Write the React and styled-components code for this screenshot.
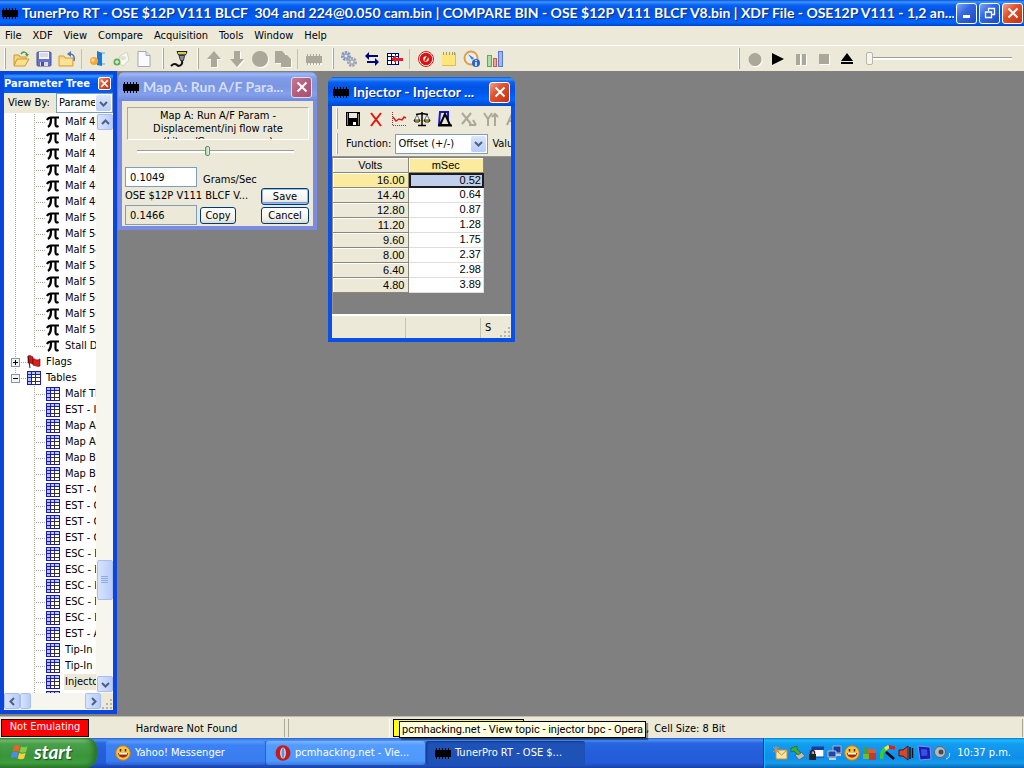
import React from "react";
import styled, { createGlobalStyle, css } from "styled-components";

const ui = '"DejaVu Sans Condensed", "DejaVu Sans", "Noto Sans", sans-serif';
const caption = 'Lato, "Open Sans", sans-serif';
const face = "#ece9d8";

const Global = createGlobalStyle`
  * { box-sizing: border-box; }
  body { margin: 0; background: #808080; font: 11px/14px ${ui}; color: #000; }
  button, input, select { font: inherit; color: inherit; margin: 0; padding: 0; }
  button { border: 0; background: none; white-space: nowrap; }
`;

/* ---------- shared ---------- */

const blueBar = "linear-gradient(#0a55dd 0, #3d95ff 2px, #0a62f2 5px, #0054e3 10px, #0058ee 16px, #0066ff 22px, #0046cc 100%)";
const paleBar = "linear-gradient(#7a96df 0, #a0b8f4 2px, #809cea 6px, #7a96e0 14px, #83a0ec 22px, #7088dc 100%)";

const Svg = styled.svg`
  display: block;
  flex: none;
`;

const Caption = styled.span`
  flex: 1;
  min-width: 0;
  overflow: hidden;
  white-space: nowrap;
  font: bold 14px/20px ${caption};
  color: ${(p) => (p.$inactive ? "#d4def8" : "#fff")};
  text-shadow: ${(p) => (p.$inactive ? "none" : "1px 1px 0 #0a2a80")};
`;

const CaptionButton = styled.button`
  flex: none;
  width: 21px;
  height: 21px;
  display: flex;
  align-items: center;
  justify-content: center;
  border: 1px solid #fff;
  border-radius: 3px;
  background: linear-gradient(135deg, #7fa5f5, #3468e0 40%, #1c48c4);
  ${(p) => p.$kind === "close" && css`background: linear-gradient(135deg, #f0a088, #e2522c 40%, #c23410);`}
  ${(p) => p.$kind === "faded" && css`background: linear-gradient(135deg, #c87890, #b45c7c 50%, #a85070); border-color: #d8e0f8;`}
`;

const Chip = ({ fill = "#000", light }) => (
  <Svg width="16" height="16" viewBox="0 0 16 16" shapeRendering="crispEdges">
    {light && <path d="M1 13h16v1H1zM15 5h2v8h-2z" fill="#fff" />}
    <path d="M0 5h16v7H0z" fill={fill} />
    <path d="M1 3h1v2H1zM4 3h1v2H4zM7 3h1v2H7zM10 3h1v2h-1zM13 3h1v2h-1zM1 12h1v2H1zM4 12h1v2H4zM7 12h1v2H7zM10 12h1v2h-1zM13 12h1v2h-1z" fill={fill} />
  </Svg>
);

const Cross = ({ size = 12, width = 2 }) => (
  <Svg width={size} height={size} viewBox="0 0 12 12">
    <path d="M1.5 1.5l9 9M10.5 1.5l-9 9" stroke="#fff" strokeWidth={width} fill="none" />
  </Svg>
);

const Chevron = ({ turn = 0 }) => (
  <Svg width="9" height="9" viewBox="0 0 9 9">
    <path d="M1 3l3.500 3.500L8 3" stroke="#4d6185" strokeWidth="2" fill="none" transform={`rotate(${turn} 4.500 4.500)`} />
  </Svg>
);

/* ---------- frame ---------- */

const App_ = styled.div`
  display: flex;
  flex-direction: column;
  height: 100vh;
  min-height: 480px;
  overflow: hidden;
`;

const TitleBar = styled.header`
  flex: none;
  height: 26px;
  display: flex;
  align-items: center;
  gap: 2px;
  padding: 0 1px 0 2px;
  background: ${blueBar};
  ${Caption} { padding-left: 2px; }
`;

const MenuBar = styled.nav`
  flex: none;
  display: flex;
  height: 20px;
  background: ${face};
  border-bottom: 1px solid #fff;
`;

const MenuItem = styled.button`
  padding: 0 6px 0 5px;
`;

const ToolbarRow = styled.div`
  flex: none;
  display: flex;
  gap: 3px;
  height: 25px;
  padding-right: 12px;
  background: ${face};
`;

const Band = styled.div`
  display: flex;
  align-items: center;
  min-width: 0;
  &::before {
    content: "";
    box-sizing: border-box;
    flex: none;
    width: 2px;
    height: 21px;
    margin: 0 3px 0 4px;
    border-left: 1px solid #fff;
    border-right: 1px solid #aca899;
  }
  ${(p) => p.$right && css`margin-left: auto;`}
`;

const ToolButton = styled.button`
  flex: none;
  width: 23px;
  height: 22px;
  display: flex;
  align-items: center;
  justify-content: center;
`;

const Divider = styled.span`
  flex: none;
  width: 8px;
  height: 20px;
  background: linear-gradient(#c5c2b0, #c5c2b0) 3px 0 / 1px 100% no-repeat;
`;

const Spacer = styled.span`
  flex: none;
  width: 8px;
`;

const Range = styled.input`
  appearance: none;
  display: block;
  height: ${(p) => (p.$small ? 12 : 14)}px;
  width: ${(p) => (p.$small ? "100%" : "146px")};
  background: linear-gradient(#9d9c99 0 1px, #fff 1px 3px) 0 center / 100% 3px no-repeat;
  &::-webkit-slider-thumb {
    appearance: none;
    width: ${(p) => (p.$small ? 5 : 7)}px;
    height: ${(p) => (p.$small ? 10 : 13)}px;
    border: 1px solid ${(p) => (p.$small ? "#5e8f6c" : "#b8b6a8")};
    border-radius: 2px;
    background: ${(p) => (p.$small ? "linear-gradient(90deg, #9ad8a4, #f4f4ee)" : "#f6f5ee")};
  }
`;

/* ---------- toolbar drawings ---------- */

const gray = "#aca899";
const Icon = ({ children, crisp, size = 18 }) => (
  <Svg width={size} height={size} viewBox="0 0 18 18" shapeRendering={crisp ? "crispEdges" : "auto"}>{children}</Svg>
);

const OpenFolder = () => (
  <Icon>
    <path d="M2 15V5h5l1 2h6v3" fill="#f6d77a" stroke="#c89a3c" />
    <path d="M2 16l3-7h12l-4 7z" fill="#fbe08a" stroke="#c89a3c" />
    <path d="M9 4c2-3 5-2 6 0" fill="none" stroke="#4d9a4a" strokeWidth="1.500" /><path d="M13 4h4l-2 3z" fill="#4d9a4a" />
  </Icon>
);
const Floppy = () => (
  <Icon>
    <rect x="2" y="2" width="14" height="14" rx="1" fill="#6a72c8" stroke="#4b4f9e" />
    <path d="M4 2h10v7H4z" fill="#f4f5fb" /><path d="M5 4h8M5 6h8" stroke="#b9bdd8" />
    <path d="M5 12h8v4H5z" fill="#d9dbe8" /><path d="M6 12h3v4H6z" fill="#4b4f9e" />
  </Icon>
);
const BackFolder = () => (
  <Icon>
    <path d="M1 16V6h5l1 2h8v8z" fill="#f8d873" stroke="#cf9f3e" /><path d="M2 9h12v6H2z" fill="#fbe294" />
    <path d="M16 11c1-5-1-7-4-7" fill="none" stroke="#5673b5" strokeWidth="1.500" /><path d="M9 4l4-3v6z" fill="#5673b5" />
  </Icon>
);
const OpenDoor = () => (
  <Icon>
    <path d="M8 2h8v13H8z" fill="#9cc7ee" /><path d="M8 1l5 2v13l-5-1z" fill="#1e7ad0" /><path d="M13 4h3v9h-3z" fill="#d8ecfb" />
    <circle cx="5" cy="11" r="4" fill="#f6a83a" /><circle cx="4" cy="10" r="1.800" fill="#ffd98c" />
  </Icon>
);
const GreenDisk = () => (
  <Icon>
    <path d="M8 6l7-4 2 8-6 6-5-4z" fill="#f8f8f2" stroke="#d4d2c4" /><ellipse cx="11" cy="8" rx="3" ry="2" fill="#e2e0d2" />
    <circle cx="5" cy="12" r="3.500" fill="#5fae55" /><path d="M3 12h4M5 10v4" stroke="#fff" />
  </Icon>
);
const Page = () => (
  <Icon><path d="M3 1.500h8l4 4v11H3z" fill="#fbfbff" stroke="#a2a6b8" /><path d="M11 1.500v4h4" fill="#dfe1ee" stroke="#a2a6b8" /></Icon>
);
const Plug = () => (
  <Icon>
    <path d="M7 1.500h10l-1.500 3.500h-7z" fill="#8a8a8a" stroke="#222" /><path d="M8 3h8" stroke="#e9dd3c" strokeWidth="1.500" />
    <path d="M9 5.500h5.500l-1 5h-3z" fill="#8c8c94" stroke="#333" /><path d="M12 11c1 4-3 6-5 4s-4-1-6 1" fill="none" stroke="#111" strokeWidth="2" />
  </Icon>
);
const Shade = ({ d }) => (
  <Icon><path d={d} fill="#fff" transform="translate(1 1)" /><path d={d} fill={gray} /></Icon>
);
const upArrow = "M9 1l7 8h-4v8H6V9H2z";
const downArrow = "M9 17l7-8h-4V1H6v8H2z";
const disc = "M9 1a8 8 0 1 0 .1 0z";
const copies = "M1 1h7l3 3v1h2l4 4v8H7v-4H1z";
const record = "M9 3a6.500 6.500 0 1 0 .1 0z";

const Gears = () => (
  <Icon>
    <circle cx="6" cy="6" r="3.500" fill="#c8d4ec" stroke="#8396bd" strokeWidth="3" strokeDasharray="2 1" />
    <circle cx="6" cy="6" r="2" fill={face} stroke="#8396bd" />
    <circle cx="12" cy="12" r="3.500" fill="#d5d9e2" stroke="#9aa2b4" strokeWidth="3" strokeDasharray="2 1" />
    <circle cx="12" cy="12" r="2" fill={face} stroke="#9aa2b4" />
  </Icon>
);
const Swap = () => (
  <Icon>
    <path d="M2 6l4-4v3h9v2H6v3z" fill="#000080" /><path d="M16 12l-4-4v3H4v2h8v3z" fill="#000080" />
  </Icon>
);
const ImportTable = () => (
  <Icon crisp>
    <path d="M1 3h12v12H1z" fill="#fff" /><path d="M1 3h12v1H1zM1 6h12v1H1zM1 10h12v1H1zM1 14h12v1H1zM1 3h1v12H1zM5 3h1v12H5zM9 3h1v12H9zM12 3h1v12h-1z" fill="#000080" />
    <path d="M5 9l5-4v3h7v3h-7v3z" fill="#ee1c1c" />
  </Icon>
);
const Target = () => (
  <Icon>
    <circle cx="9" cy="9" r="7.500" fill="#fff" stroke="#d01c1c" /><circle cx="9" cy="9" r="4.500" fill="none" stroke="#d81414" strokeWidth="3.500" />
    <path d="M8 11l3-5" stroke="#d81414" strokeWidth="2" />
  </Icon>
);
const Notepad = () => (
  <Icon crisp>
    <path d="M2 3h14v13H2z" fill="#fbe67c" /><path d="M15 3h1v13h-1zM2 15h14v1H2z" fill="#e0bd4c" />
    <path d="M3 2h1v3H3zM6 2h1v3H6zM9 2h1v3H9zM12 2h1v3h-1zM14 2h1v3h-1z" fill="#a09a78" />
  </Icon>
);
const Compass = () => (
  <Icon>
    <circle cx="8" cy="8" r="6.500" fill="#e6eefa" stroke="#e0a040" strokeWidth="2" /><path d="M5 4l6 4-2 2z" fill="#5a7ac0" />
    <circle cx="13" cy="13" r="4" fill="#2a66c8" /><path d="M13 12v4M13 10v1" stroke="#fff" strokeWidth="1.500" />
  </Icon>
);
const Chart = () => (
  <Icon crisp>
    <path d="M1 5h5v12H1z" fill="#5cab58" /><path d="M2 6h3v10H2z" fill="#a9dfa0" />
    <path d="M7 8h4v9H7z" fill="#cc5a50" /><path d="M8 9h2v7H8z" fill="#f0a49c" />
    <path d="M12 1h5v16h-5z" fill="#5a78c8" /><path d="M13 2h3v14h-3z" fill="#a0b8f0" />
  </Icon>
);

/* ---------- parameter tree ---------- */

const Workspace = styled.main`
  flex: 1;
  min-height: 0;
  display: flex;
  background: #808080;
`;

const Dock = styled.aside`
  flex: none;
  width: 117px;
  margin-bottom: 2px;
  display: flex;
  flex-direction: column;
  border: 4px solid #0a45dc;
  border-top-width: 3px;
`;

const DockTitle = styled.div`
  flex: none;
  height: 19px;
  display: flex;
  align-items: center;
  justify-content: space-between;
  padding-right: 2px;
  background: ${blueBar};
  color: #fff;
  font-weight: bold;
  white-space: nowrap;
  ${CaptionButton} { width: 13px; height: 13px; border-radius: 2px; }
`;

const ViewBy = styled.div`
  flex: none;
  display: flex;
  align-items: center;
  justify-content: space-between;
  height: 20px;
  padding-left: 4px;
  background: ${face};
  white-space: nowrap;
`;

const SelectBox = styled.span`
  position: relative;
  flex: none;
  display: block;
  width: ${(p) => p.$w}px;
  height: 20px;
  border: 1px solid #7f9db9;
  background: #fff;
  select {
    appearance: none;
    display: block;
    width: 100%;
    height: 100%;
    border: 0;
    padding: 0 17px 0 2px;
    background: transparent;
    text-overflow: clip;
  }
  i {
    position: absolute;
    top: 1px;
    right: 1px;
    bottom: 1px;
    width: 15px;
    display: flex;
    align-items: center;
    justify-content: center;
    border-radius: 2px;
    background: linear-gradient(#dbe6fe, #b9cdf8);
    pointer-events: none;
  }
`;

const TreeArea = styled.div`
  flex: 1;
  min-height: 0;
  display: flex;
  background: #fff;
`;

const List = styled.ul`
  flex: 1;
  min-width: 0;
  margin: 0;
  padding: 1px 0 0;
  list-style: none;
  overflow: hidden;
`;

const dots = (angle) => `repeating-linear-gradient(${angle}deg, #a8a890 0 1px, transparent 1px 2px)`;

const Node = styled.li`
  display: flex;
  align-items: center;
  height: 16px;
  white-space: nowrap;
`;

const Root = styled.span`
  flex: none;
  width: 23px;
  height: 16px;
  display: flex;
  align-items: center;
  padding-left: 7px;
  background:
    ${(p) => (p.$line === "none" ? "none" : `${dots(180)} 11px 0 / 1px ${p.$line === "end" ? 8 : 16}px no-repeat`)}
    ${(p) => (p.$elbow ? `, ${dots(90)} 11px 8px / 12px 1px no-repeat` : "")};
`;

const Branch = styled.span`
  flex: none;
  width: 19px;
  height: 16px;
  background:
    ${dots(180)} 7px 0 / 1px ${(p) => (p.$end ? 8 : 16)}px no-repeat,
    ${dots(90)} 7px 8px / 11px 1px no-repeat;
`;

const Label = styled.span`
  margin-left: 4px;
  padding: 0 1px;
  line-height: 16px;
  background: ${(p) => (p.$selected ? face : "transparent")};
`;

const Pi = () => (
  <Svg width="14" height="14" viewBox="0 0 14 14">
    <path d="M1 5c1-2 2-2.500 4-2.500h8M5 3c0 4 0 7-3 9M9.500 3v6c0 2.500 1 3 3 2" fill="none" stroke="#000" strokeWidth="2.200" />
  </Svg>
);
const Grid = () => (
  <Svg width="14" height="14" viewBox="0 0 14 14" shapeRendering="crispEdges">
    <path d="M0 0h14v14H0z" fill="#1a1ab8" />
    <path d="M1 1h3v2H1zM5 1h3v2H5zM9 1h4v2H9zM1 4h3v2H1zM1 7h3v3H1zM1 11h3v2H1z" fill="#b4c4f8" />
    <path d="M5 4h3v2H5zM9 4h4v2H9zM5 7h3v3H5zM9 7h4v3H9zM5 11h3v2H5zM9 11h4v2H9z" fill="#fff" />
    <path d="M8 4h1v9H8zM5 6h8v1H5zM5 10h8v1H5z" fill="#333" />
  </Svg>
);
const Flag = () => (
  <Svg width="14" height="14" viewBox="0 0 14 14">
    <path d="M1 1c2-1 3 0 5 1v7c-2-1-3-1-5-1z" fill="#d81818" stroke="#600" strokeWidth=".6" />
    <path d="M6 4c2-1 2 1 4 1s2-1 3-1v7c-2 1-3 0-4 0l-3-1z" fill="#e02020" stroke="#600" strokeWidth=".6" />
    <path d="M1 1l2 12" stroke="#222" />
  </Svg>
);
const Expander = ({ open }) => (
  <Svg width="9" height="9" viewBox="0 0 9 9" shapeRendering="crispEdges">
    <path d="M0 0h9v9H0z" fill="#7898b5" /><path d="M1 1h7v7H1z" fill="#f4f3ee" /><path d={open ? "M2 4h5v1H2z" : "M2 4h5v1H2zM4 2h1v5H4z"} />
  </Svg>
);

const ScrollBar = styled.div`
  flex: none;
  display: flex;
  flex-direction: ${(p) => (p.$across ? "row" : "column")};
  ${(p) => (p.$across ? "height: 17px; flex: 1;" : "width: 17px;")}
  background: #f6f5ee;
  padding: ${(p) => (p.$across ? "0" : "1px 0 1px 1px")};
`;

const ScrollPart = styled.button`
  flex: none;
  width: ${(p) => p.$w || 16}px;
  height: ${(p) => p.$h || 16}px;
  display: flex;
  align-items: center;
  justify-content: center;
  border: 1px solid #a9bdf0;
  border-radius: 2px;
  background: linear-gradient(90deg, #d8e4fe, #b8ccf9);
`;

const Gap = styled.span`
  flex: ${(p) => p.$grow || 1} 1 0;
`;

const Corner = styled.div`
  display: flex;
  flex: none;
  align-items: flex-end;
  background: ${face};
`;

const Dots = () => (
  <Svg width="12" height="12" viewBox="0 0 12 12" shapeRendering="crispEdges">
    <path d="M9 1h2v2H9zM5 5h2v2H5zM9 5h2v2H9zM1 9h2v2H1zM5 9h2v2H5zM9 9h2v2H9z" fill="#b8b4a2" />
  </Svg>
);

/* ---------- inner windows ---------- */

const Canvas = styled.section`
  flex: 1;
  min-width: 0;
  position: relative;
  overflow: hidden;
`;

const Window = styled.article`
  position: absolute;
  left: ${(p) => p.$x}px;
  top: ${(p) => p.$y}px;
  width: ${(p) => p.$w}px;
  border: 4px solid ${(p) => (p.$inactive ? "#7b8be0" : "#0a50e4")};
  border-top: 0;
  border-radius: 7px 7px 0 0;
  background: ${(p) => (p.$inactive ? "#7b8be0" : "#0a50e4")};
`;

const WindowTitle = styled.header`
  height: 29px;
  margin: 0 -4px;
  display: flex;
  align-items: center;
  gap: 4px;
  padding: 1px 5px 0;
  border-radius: 7px 7px 0 0;
  background: ${(p) => (p.$inactive ? paleBar : blueBar)};
`;

const DialogBody = styled.form`
  display: flex;
  flex-direction: column;
  height: 125px;
  padding: 6px 4px 6px 3px;
  background: ${face};
`;

const Legend = styled.p`
  flex: none;
  margin: 0 0 5px 2px;
  height: 33px;
  padding-top: 1px;
  overflow: hidden;
  border: 1px solid #aca899;
  border-right-color: #fff;
  border-bottom-color: #fff;
  line-height: 13px;
  text-align: center;
`;

const SliderLine = styled.div`
  flex: none;
  padding: 0 15px 0 12px;
  margin-bottom: 10px;
`;

const FieldGrid = styled.div`
  display: grid;
  grid-template-columns: 72px 1fr 48px;
  grid-template-rows: 20px 16px 20px;
  column-gap: 3px;
  align-items: center;
  row-gap: 1px;
`;

const UnitLabel = styled.label`
  grid-column: 2 / 4;
  padding: 6px 0 0 3px;
`;

const BinName = styled.label`
  grid-column: 1 / 3;
  white-space: nowrap;
`;

const TextBox = styled.input`
  width: 72px;
  height: 20px;
  padding: 0 4px;
  border: 1px solid #7f9db9;
  border-radius: 0;
  background: ${(p) => (p.readOnly ? face : "#fff")};
`;

const PushButton = styled.button`
  width: ${(p) => p.$w}px;
  height: 17px;
  border: 1px solid #003c74;
  border-radius: 3px;
  background: linear-gradient(#fff, #f3f2ec 70%, #dcd8cc);
  box-shadow: ${(p) => (p.$default ? "inset 0 0 0 1px #9cb8ee, inset 0 -2px 0 #7c9ce0" : "none")};
  line-height: 15px;
`;

const InnerBody = styled.div`
  background: ${face};
  overflow: hidden;
`;

const InnerBar = styled.div`
  display: flex;
  height: 25px;
  overflow: hidden;
  white-space: nowrap;
`;

const FunctionLabel = styled.label`
  padding: 0 4px 0 5px;
`;

const ValueLabel = styled.span`
  padding-left: 4px;
`;

const SheetArea = styled.div`
  height: 158px;
  padding-top: 1px;
  border: 1px solid #9a978a;
  border-width: 1px 0 0 1px;
  background: #808080;
`;

const Sheet = styled.table`
  border-collapse: separate;
  border-spacing: 0;
  table-layout: fixed;
  width: 151px;
  font: 11px/13px "Liberation Sans", Arial, sans-serif;
  th, td {
    height: 15px;
    padding: 1px 3px 0 0;
    text-align: right;
    font-weight: normal;
  }
  th {
    background: ${face};
    border-right: 1px solid #8a887a;
    border-bottom: 1px solid #8a887a;
    box-shadow: inset 1px 1px 0 #fff;
  }
  thead th { text-align: center; padding-right: 0; }
  td {
    background: #fff;
    border-right: 1px solid #dedede;
    border-bottom: 1px solid #dedede;
    padding: 0 2px 1px 0;
  }
  th.hot { background: #fbeb9e; }
  td.hot { background: #c0d0ec; border: 0; outline: 2px solid #1c1c1c; outline-offset: -2px; padding-right: 3px; }
`;

const SheetStatus = styled.footer`
  display: flex;
  height: 24px;
  padding-top: 2px;
  border-top: 2px solid #fff;
  background: ${face};
  line-height: 20px;
`;

const StatusCell = styled.span`
  width: ${(p) => p.$w}px;
  padding-left: 4px;
  border-right: 1px solid #c5c2b0;
`;

const Last = styled.span`
  flex: 1;
  display: flex;
  justify-content: space-between;
  align-items: flex-end;
  padding-left: 4px;
`;

const BlackFloppy = () => (
  <Icon crisp>
    <path d="M2 2h14v14H2z" fill="#000" /><path d="M5 3h8v5H5z" fill={face} /><path d="M3 3h1v12H3zM14 4h1v11h-1z" fill="#8a8a30" /><path d="M9 12h3v3H9z" fill="#fff" />
  </Icon>
);
const RedX = () => <Icon><path d="M4 3l10 13M14 3L4 16" stroke="#e81010" strokeWidth="2" fill="none" /></Icon>;
const Curve = () => (
  <Icon>
    <path d="M2.500 2v13.500H17" stroke="#a03030" strokeDasharray="1 1" fill="none" /><path d="M3 7l3 4 3-2 3 1 2-3 2 1" stroke="#e01818" strokeWidth="1.400" fill="none" />
  </Icon>
);
const Scale = () => (
  <Icon>
    <path d="M9 2v13M5 15.500h8M3 4.500l6-1 6 1" stroke="#000" strokeWidth="1.500" fill="none" />
    <path d="M4 5l-3 6h6zM14 5l-3 6h6z" fill="#fff" stroke="#333" strokeWidth=".7" /><path d="M1 10h6l-1 2H2zM11 10h6l-1 2h-4z" fill="#e8d840" stroke="#000" strokeWidth=".8" />
  </Icon>
);
const Difference = () => (
  <Icon>
    <path d="M4 2h8v13H3z" fill={face} stroke="#1414e0" strokeWidth="2" /><path d="M9 4l5 11H4z" fill={face} stroke="#000" strokeWidth="2" /><path d="M2 15.500h14" stroke="#000" strokeWidth="2" />
  </Icon>
);
const GrayX = () => <Icon><path d="M3 3l9 11M12 3L3 14M10 15h7M14 10l3 5" stroke={gray} strokeWidth="2" fill="none" /></Icon>;
const GrayY = () => <Icon><path d="M2 3l4 6 4-6M6 9v7M13 16V4M10 7l3-3 3 3" stroke={gray} strokeWidth="2" fill="none" /></Icon>;
const GrayZ = () => <Icon><path d="M2 15l4-9 4 9M4 11h5" stroke={gray} strokeWidth="2" fill="none" /></Icon>;

/* ---------- status bar and task bar ---------- */

const StatusBar = styled.footer`
  flex: none;
  position: relative;
  display: flex;
  height: 22px;
  padding: 2px 0 1px 1px;
  background: ${face};
  border-top: 1px solid #c0bca8;
  white-space: nowrap;
  line-height: 20px;
`;

const EmulationCell = styled.span`
  width: 88px;
  border: 1px solid #000;
  background: #f00;
  color: #fff;
  line-height: 14px;
  text-align: center;
`;

const MessageCell = styled.span`
  width: ${(p) => p.$w}px;
  text-align: center;
  border-right: 1px solid #aca899;
  margin-right: 3px;
  & + & { border-left: 1px solid #aca899; border-right-color: #fff; }
`;

const YellowCell = styled.span`
  width: 131px;
  border: 1px solid #000;
  background: #ffff10;
`;

const CellSize = styled.span`
  flex: 1;
  display: flex;
  gap: 5px;
  padding-left: 122px;
  margin-right: 1px;
  border-right: 1px solid #aca899;
`;

const Tooltip = styled.div`
  position: absolute;
  left: 399px;
  top: 4px;
  height: 17px;
  padding: 0 2px;
  border: 1px solid #000;
  background: #ffffe1;
  font-family: Roboto, "Liberation Sans", sans-serif;
  line-height: 16px;
  box-shadow: 2px 2px 1px rgba(0, 0, 0, 0.4);
  z-index: 1;
`;

const TaskBar = styled.footer`
  flex: none;
  display: flex;
  align-items: center;
  height: 30px;
  background: linear-gradient(#2a5cc8 0, #4a94f8 2px, #2a66e0 5px, #245edb 14px, #245bd8 25px, #1941a5 100%);
  color: #fff;
`;

const Start = styled.button`
  align-self: stretch;
  width: 97px;
  margin-right: 9px;
  display: flex;
  align-items: center;
  gap: 5px;
  padding: 0 0 2px 11px;
  border-radius: 0 10px 12px 0;
  background: linear-gradient(#3c8a3c 0, #7cc07c 2px, #48a048 6px, #3a943a 18px, #3e9e3e 25px, #2a7a2a 100%);
  box-shadow: inset -4px 0 5px #2a742a;
  font: italic bold 19px/20px ${caption};
  text-shadow: 1px 1px 1px #1c4a1c;
`;

const Task = styled.button`
  width: 159px;
  height: 24px;
  margin-right: 1px;
  display: flex;
  align-items: center;
  gap: 4px;
  padding-left: 9px;
  border-radius: 3px;
  text-align: left;
  background: linear-gradient(#5a9cfc 0, #3c81f3 4px, #3a7cf0 20px, #2c60d0 100%);
  ${(p) => p.$hot && css`background: linear-gradient(#7cb4ff 0, #539cff 4px, #4f98fc 20px, #3a7ce0 100%);`}
  ${(p) => p.$pressed && css`background: #1e52b7; box-shadow: inset 1px 1px 2px #123a8a;`}
`;

const Tray = styled.div`
  align-self: stretch;
  margin-left: auto;
  display: flex;
  align-items: center;
  gap: 2px;
  padding: 0 13px 0 8px;
  border-left: 1px solid #0a3c9c;
  background: linear-gradient(#1470cc 0, #18bbff 2px, #149cf0 6px, #0f8dea 20px, #139ee9 25px, #0b64b4 100%);
  box-shadow: inset 1px 0 0 #18bbff;
  time { padding-left: 5px; }
`;

const Smiley = () => (
  <Svg width="16" height="16" viewBox="0 0 16 16">
    <circle cx="8" cy="8" r="7.300" fill="#fbc33c" stroke="#c87a14" /><path d="M3 8h10c0 6-10 6-10 0z" fill="#a02814" /><path d="M4 8h8v1.500H4z" fill="#fff" />
    <path d="M5.500 4v2.500M10.500 4v2.500" stroke="#3a2408" strokeWidth="1.500" />
  </Svg>
);
const Opera = () => (
  <Svg width="16" height="16" viewBox="0 0 16 16"><ellipse cx="8" cy="8" rx="7.500" ry="7.800" fill="#c41c1c" /><ellipse cx="8" cy="8" rx="2.800" ry="5.600" fill="#e8eefc" /><ellipse cx="8" cy="8" rx="1.500" ry="5" fill="#5f8fe0" /></Svg>
);
const WinLogo = () => (
  <Svg width="18" height="18" viewBox="0 0 18 18">
    <path d="M3 3c2-1.500 4-1 6 0L7.500 8.500c-2-1-4-1-6 0z" fill="#f0602c" /><path d="M10 3.500c2 1 4 1 6.500 0L15 9c-2 1-4 1-6.500 0z" fill="#8cc84a" />
    <path d="M1.200 9.500c2-1 4-1 6 0L5.800 15c-2-1-4-1-6 0z" fill="#4c8cf0" /><path d="M8.200 10c2 1 4 1 6.500 0L13 15.500c-2 1-4 1-6.300 0z" fill="#fbd03c" />
  </Svg>
);
const T = ({ children }) => <Svg width="16" height="16" viewBox="0 0 16 16">{children}</Svg>;
const trayIcons = [
  <T key="mail"><path d="M4 5h11v9H4z" fill="#fbe6a8" stroke="#c88a30" /><path d="M4 5l5.500 5L15 5" fill="none" stroke="#c88a30" /><path d="M4 1v7M1 2l6 5M1 7l6-5" stroke="#f08a3c" /></T>,
  <T key="eject"><path d="M5 10l6-3 4 4-6 4z" fill="#b8bcc4" stroke="#555" strokeWidth=".7" /><path d="M1 3l6-2v3l4 4-3 2-4-4-3 1z" fill="#3cac3c" stroke="#1c6c1c" strokeWidth=".7" /></T>,
  <T key="lock"><path d="M4 2h12v10H4z" fill="#fff" stroke="#123c9c" /><path d="M4 2h12v3H4z" fill="#1c3ca0" /><path d="M1 9h7v6H1z" fill="#222" /><path d="M2.500 9V7.500a2 2 0 0 1 4 0V9" fill="none" stroke="#222" strokeWidth="1.500" /></T>,
  <T key="network"><path d="M7 1h8v7H7z" fill="#1c3c9c" stroke="#a8b4d0" /><path d="M2 6h8v6H2z" fill="#26469c" stroke="#b8c4dc" /><path d="M3 14h7M10 10h5" stroke="#c8ccd8" strokeWidth="2" /></T>,
  <Smiley key="smile" />,
  <T key="blocks"><path d="M2 2h4v11H2z" fill="#40a040" /><path d="M6 4h8v5H6z" fill="#d86030" /><path d="M7 8h7v7H7z" fill="#c03c2c" /><path d="M1 9h6v5H1z" fill="#6cbc3c" /></T>,
  <T key="gauge"><path d="M2 14C1 9 2 6 5 4" stroke="#3ccc2c" strokeWidth="3.500" fill="none" /><path d="M5 4l4-2.500" stroke="#f8e82c" strokeWidth="3.500" /><path d="M9 0l6 1.500v3L9 4z" fill="#e01c1c" /><path d="M6 7l8 7" stroke="#000" strokeWidth="2.500" /></T>,
  <T key="sound"><path d="M1 5h4l5-4v14l-5-4H1z" fill="#d8462c" stroke="#501408" /><path d="M12 2v12M14.500 3v10" stroke="#111" strokeWidth="1.400" /></T>,
  <T key="screen"><path d="M2 1l12 1 1 12-11 1z" fill="#1420b4" stroke="#8094f0" /><path d="M5 4l6 .5.5 6-6 .5z" fill="#3c50e0" /></T>,
  <T key="volume"><circle cx="6" cy="7" r="5.500" fill="#b4b8c0" stroke="#60646c" /><circle cx="7" cy="7" r="2.500" fill="#484c54" /><path d="M12 14c3-1 4-3 3.500-6" stroke="#dce8fc" fill="none" /></T>,
];

/* ---------- content ---------- */

const scalars = ["Malf 45", "Malf 45", "Malf 45", "Malf 46", "Malf 46", "Malf 46", "Malf 54", "Malf 54", "Malf 54", "Malf 54", "Malf 56", "Malf 56", "Malf 56", "Malf 56", "Stall D"];
const tables = ["Malf TH", "EST - I", "Map A", "Map A", "Map B", "Map B", "EST - C", "EST - C", "EST - C", "EST - C", "ESC - E", "ESC - E", "ESC - I", "ESC - E", "ESC - E", "EST - A", "Tip-In", "Tip-In", "Injector", "Injector"];
const sheet = [["16.00", "0.52"], ["14.40", "0.64"], ["12.80", "0.87"], ["11.20", "1.28"], ["9.60", "1.75"], ["8.00", "2.37"], ["6.40", "2.98"], ["4.80", "3.89"]];
const menus = ["File", "XDF", "View", "Compare", "Acquisition", "Tools", "Window", "Help"];

const Tools = ({ items }) => items.map(([name, icon], i) =>
  name === "|" ? <Divider key={i} /> : <ToolButton key={i} aria-label={name}>{icon}</ToolButton>
);

const ParameterTree = () => (
  <Dock>
    <DockTitle>Parameter Tree<CaptionButton $kind="close" aria-label="Close tree"><Cross size={9} /></CaptionButton></DockTitle>
    <ViewBy>
      <label htmlFor="viewby">View By:</label>
      <SelectBox $w={57}><select id="viewby"><option>Parameter</option></select><i><Chevron /></i></SelectBox>
    </ViewBy>
    <TreeArea>
      <List>
        {scalars.map((t, i) => (
          <Node key={i}><Root /><Branch $end={i === scalars.length - 1} /><Pi /><Label>{t}</Label></Node>
        ))}
        <Node><Root $elbow><Expander /></Root><Flag /><Label>Flags</Label></Node>
        <Node><Root $elbow $line="end"><Expander open /></Root><Grid /><Label>Tables</Label></Node>
        {tables.map((t, i) => (
          <Node key={i}><Root $line="none" /><Branch /><Grid /><Label $selected={i === 18}>{t}</Label></Node>
        ))}
      </List>
      <ScrollBar>
        <ScrollPart aria-label="Scroll up"><Chevron turn={180} /></ScrollPart>
        <Gap $grow={431} />
        <ScrollPart $h={40} aria-label="Position">
          <Svg width="8" height="8" viewBox="0 0 8 8" shapeRendering="crispEdges"><path d="M0 0h7v1H0zM0 2h7v1H0zM0 4h7v1H0zM0 6h7v1H0z" fill="#8ca8e8" /></Svg>
        </ScrollPart>
        <Gap $grow={76} />
        <ScrollPart aria-label="Scroll down"><Chevron /></ScrollPart>
      </ScrollBar>
    </TreeArea>
    <Corner>
      <ScrollBar $across>
        <ScrollPart aria-label="Scroll left"><Chevron turn={90} /></ScrollPart>
        <ScrollPart $w={11} aria-label="Position" />
        <Gap />
        <ScrollPart aria-label="Scroll right"><Chevron turn={270} /></ScrollPart>
      </ScrollBar>
      <Dots />
    </Corner>
  </Dock>
);

const MapWindow = () => (
  <Window $inactive $x={1} $y={1} $w={199}>
    <WindowTitle $inactive>
      <Chip />
      <Caption $inactive>Map A: Run A/F Para...</Caption>
      <CaptionButton $kind="faded" aria-label="Close"><Cross /></CaptionButton>
    </WindowTitle>
    <DialogBody>
      <Legend>Map A: Run A/F Param -<br />Displacement/inj flow rate<br />(Litres/Grams per sec)</Legend>
      <SliderLine><Range $small type="range" min="0" max="100" defaultValue="45" aria-label="Value" /></SliderLine>
      <FieldGrid>
        <TextBox id="grams" defaultValue="0.1049" />
        <UnitLabel htmlFor="grams">Grams/Sec</UnitLabel>
        <BinName htmlFor="other">OSE $12P V111 BLCF V...</BinName>
        <PushButton type="button" $w={48} $default>Save</PushButton>
        <TextBox id="other" readOnly value="0.1466" />
        <PushButton type="button" $w={36}>Copy</PushButton>
        <PushButton type="button" $w={48}>Cancel</PushButton>
      </FieldGrid>
    </DialogBody>
  </Window>
);

const InjectorWindow = () => (
  <Window $x={211} $y={6} $w={187}>
    <WindowTitle>
      <Chip />
      <Caption>Injector - Injector ...</Caption>
      <CaptionButton $kind="close" aria-label="Close"><Cross /></CaptionButton>
    </WindowTitle>
    <InnerBody>
      <InnerBar>
        <Band>
          <Tools items={[["Save", <BlackFloppy />], ["Delete", <RedX />], ["Graph", <Curve />], ["Compare", <Scale />], ["Difference", <Difference />], ["X axis", <GrayX />], ["Y axis", <GrayY />], ["Axis", <GrayZ />]]} />
        </Band>
      </InnerBar>
      <InnerBar>
        <Band>
          <FunctionLabel htmlFor="fn">Function:</FunctionLabel>
          <SelectBox $w={93}><select id="fn"><option>Offset (+/-)</option></select><i><Chevron /></i></SelectBox>
          <ValueLabel>Value:</ValueLabel>
        </Band>
      </InnerBar>
      <SheetArea>
        <Sheet>
          <thead><tr><th>Volts</th><th className="hot">mSec</th></tr></thead>
          <tbody>
            {sheet.map(([v, ms], i) => (
              <tr key={v}><th scope="row" className={i ? "" : "hot"}>{v}</th><td className={i ? "" : "hot"}>{ms}</td></tr>
            ))}
          </tbody>
        </Sheet>
      </SheetArea>
      <SheetStatus><StatusCell $w={74} /><StatusCell $w={75} /><Last>S<Dots /></Last></SheetStatus>
    </InnerBody>
  </Window>
);

export default function App() {
  return (
    <App_>
      <Global />
      <TitleBar>
        <Chip />
        <Caption>TunerPro RT - OSE $12P V111 BLCF&nbsp; 304 and 224@0.050 cam.bin | COMPARE BIN - OSE $12P V111 BLCF V8.bin | XDF File - OSE12P V111 - 1,2 an...</Caption>
        <CaptionButton aria-label="Minimize"><Svg width="12" height="12" viewBox="0 0 12 12"><path d="M2 8h7v3H2z" fill="#fff" /></Svg></CaptionButton>
        <CaptionButton aria-label="Restore"><Svg width="12" height="12" viewBox="0 0 12 12"><path d="M4.500 4V1.500h6v6H8M1.500 5h6v5.500h-6z" fill="none" stroke="#fff" strokeWidth="1.300" /></Svg></CaptionButton>
        <CaptionButton $kind="close" aria-label="Close"><Cross /></CaptionButton>
      </TitleBar>
      <MenuBar>{menus.map((m) => <MenuItem key={m}>{m}</MenuItem>)}</MenuBar>
      <ToolbarRow>
        <Band><Tools items={[["Open", <OpenFolder />], ["Save", <Floppy />], ["Reload", <BackFolder />], ["|"], ["Load definition", <OpenDoor />], ["Edit definition", <GreenDisk />], ["New", <Page />]]} /></Band>
        <Band><Tools items={[["Connect", <Plug />]]} /></Band>
        <Band><Tools items={[["Upload", <Shade d={upArrow} />], ["Download", <Shade d={downArrow} />], ["Verify", <Shade d={disc} />], ["Copy", <Shade d={copies} />], ["|"], ["Chip", <Chip fill={gray} light />]]} /></Band>
        <Band><Tools items={[["Settings", <Gears />], ["Swap", <Swap />], ["Import", <ImportTable />], ["|"], ["Acquire", <Target />], ["Notes", <Notepad />], ["Monitor", <Compass />], ["Chart", <Chart />]]} /></Band>
        <Band $right>
          <Tools items={[
            ["Record", <Shade d={record} />],
            ["Play", <Icon><path d="M3 3l12 6-12 6z" /></Icon>],
            ["Pause", <Shade d="M4 4h4v11H4zM10 4h4v11h-4z" />],
            ["Stop", <Shade d="M4 4h10v10H4z" />],
            ["Eject", <Icon><path d="M9 3l6 8H3zM3 12h12v2H3z" /></Icon>],
          ]} />
          <Spacer />
          <Range type="range" min="0" max="100" defaultValue="0" aria-label="Playback position" />
        </Band>
      </ToolbarRow>
      <Workspace>
        <ParameterTree />
        <Canvas>
          <MapWindow />
          <InjectorWindow />
        </Canvas>
      </Workspace>
      <StatusBar>
        <EmulationCell>Not Emulating</EmulationCell>
        <MessageCell $w={196}>Hardware Not Found</MessageCell>
        <MessageCell $w={102} />
        <YellowCell />
        <CellSize><span>,</span><span>Cell Size: 8 Bit</span></CellSize>
        <Tooltip role="tooltip">pcmhacking.net - View topic - injector bpc - Opera</Tooltip>
      </StatusBar>
      <TaskBar>
        <Start><WinLogo />start</Start>
        <Task><Smiley />Yahoo! Messenger</Task>
        <Task $hot><Opera />pcmhacking.net - Vie...</Task>
        <Task $pressed><Chip />TunerPro RT - OSE $...</Task>
        <Tray>{trayIcons}<time>10:37 p.m.</time></Tray>
      </TaskBar>
    </App_>
  );
}
